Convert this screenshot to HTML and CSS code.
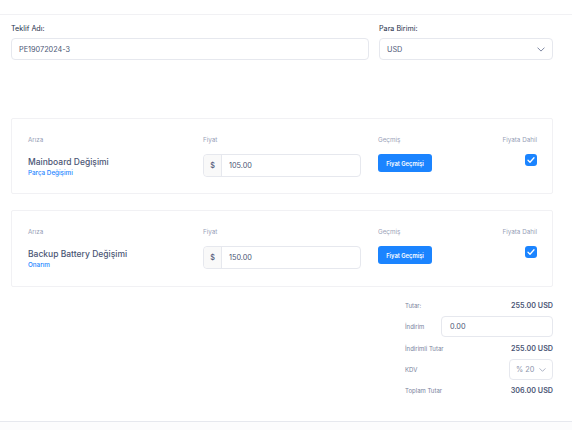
FILE: index.html
```
<!DOCTYPE html>
<html lang="tr">
<head>
<meta charset="utf-8">
<link rel="stylesheet" href="styles.css">
</head>
<body>
<div class="topbar"></div>
<div class="page">
  <div class="form-row">
    <div class="field grow">
      <label class="flabel">Teklif Adı:</label>
      <div class="input">PE19072024-3</div>
    </div>
    <div class="field side">
      <label class="flabel">Para Birimi:</label>
      <div class="input select">USD
        <svg class="chev" viewBox="0 0 10 6" width="8" height="5"><path d="M1 1l4 4 4-4" fill="none" stroke="#78829d" stroke-width="1.2" stroke-linecap="round" stroke-linejoin="round"/></svg>
      </div>
    </div>
  </div>

  <div class="card">
    <div class="grid">
      <div class="hd">Arıza</div>
      <div class="hd">Fiyat</div>
      <div class="hd">Geçmiş</div>
      <div class="hd right">Fiyata Dahil</div>
      <div class="name">
        <div class="title">Mainboard Değişimi</div>
        <div class="sub">Parça Değişimi</div>
      </div>
      <div class="igroup"><span class="addon">$</span><span class="ival">105.00</span></div>
      <div class="cell"><span class="btn">Fiyat Geçmişi</span></div>
      <div class="cell right"><span class="check"><svg viewBox="0 0 12 12" width="12" height="12"><path d="M3 6.2l2 2 4-4.4" fill="none" stroke="#fff" stroke-width="1.3" stroke-linecap="round" stroke-linejoin="round"/></svg></span></div>
    </div>
  </div>

  <div class="card second">
    <div class="grid">
      <div class="hd">Arıza</div>
      <div class="hd">Fiyat</div>
      <div class="hd">Geçmiş</div>
      <div class="hd right">Fiyata Dahil</div>
      <div class="name">
        <div class="title">Backup Battery Değişimi</div>
        <div class="sub">Onarım</div>
      </div>
      <div class="igroup"><span class="addon">$</span><span class="ival">150.00</span></div>
      <div class="cell"><span class="btn">Fiyat Geçmişi</span></div>
      <div class="cell right"><span class="check"><svg viewBox="0 0 12 12" width="12" height="12"><path d="M3 6.2l2 2 4-4.4" fill="none" stroke="#fff" stroke-width="1.3" stroke-linecap="round" stroke-linejoin="round"/></svg></span></div>
    </div>
  </div>

  <div class="summary">
    <div class="srow"><span class="sl">Tutar:</span><span class="sv">255.00 USD</span></div>
    <div class="srow"><span class="sl">İndirim</span><span class="input sinput">0.00</span></div>
    <div class="srow"><span class="sl">İndirimli Tutar</span><span class="sv">255.00 USD</span></div>
    <div class="srow"><span class="sl">KDV</span><span class="input kdv">% 20 <svg viewBox="0 0 10 6" width="7" height="4"><path d="M1 1l4 4 4-4" fill="none" stroke="#99a1b7" stroke-width="1.2" stroke-linecap="round" stroke-linejoin="round"/></svg></span></div>
    <div class="srow"><span class="sl">Toplam Tutar</span><span class="sv">306.00 USD</span></div>
  </div>
</div>
<div class="bottombar"></div>
</body>
</html>
```
FILE: styles.css
```
* { box-sizing: border-box; }
html, body { margin: 0; padding: 0; background: #fff; }
body {
  font-family: Inter, "Noto Sans", sans-serif;
  color: #252f4a;
  width: 572px;
  height: 430px;
  overflow: hidden;
  position: relative;
}
.topbar { height: 15px; border-bottom: 1px solid #f1f1f4; }
.page { padding: 0 19px 0 11px; }
.form-row { display: flex; gap: 10px; margin-top: 10px; }
.field { display: flex; flex-direction: column; }
.grow { flex: 1; }
.side { width: 174px; }
.flabel { font-size: 7.2px; font-weight: 400; color: #252f4a; height: 13px; line-height: 8px; }
.input {
  height: 22px;
  border: 1px solid #e6e8ee;
  border-radius: 4px;
  font-size: 7.3px;
  color: #4b5675;
  display: flex;
  align-items: center;
  padding: 0 7px;
}
.select { justify-content: space-between; padding-right: 7px; }
.card {
  border: 1px solid #f1f1f4;
  border-radius: 2px;
  padding: 17px 15px 15px 16px;
  margin-top: 58px;
}
.card.second { margin-top: 16px; padding-bottom: 16px; }
.grid {
  display: grid;
  grid-template-columns: 175px 175px 1fr auto;
  row-gap: 9px;
  align-items: start;
}
.hd { font-size: 6.3px; color: #99a1b7; line-height: 9px; }
.cell { display: flex; }
.right { text-align: right; justify-self: end; }
.name { padding-top: 2px; }
.title { font-size: 8.5px; font-weight: 500; color: #4b5675; line-height: 12px; }
.sub { font-size: 6.3px; font-weight: 500; color: #1b84ff; line-height: 10px; }
.igroup {
  width: 158px;
  height: 23px;
  border: 1px solid #e6e8ee;
  border-radius: 4px;
  display: flex;
  font-size: 7.3px;
  color: #4b5675;
}
.addon {
  width: 18px;
  background: #f9f9f9;
  border-right: 1px solid #e6e8ee;
  border-radius: 4px 0 0 4px;
  display: flex;
  align-items: center;
  justify-content: center;
  font-weight: 500;
  color: #4b5675;
}
.ival { display: flex; align-items: center; padding-left: 7px; }
.btn {
  display: flex;
  align-items: center;
  justify-content: center;
  width: 54px;
  height: 18px;
  background: #1b84ff;
  color: #fff;
  border-radius: 3px;
  font-size: 5.8px;
  font-weight: 600;
}
.check {
  display: block;
  width: 12px;
  height: 12px;
  border-radius: 3px;
  background: #1b84ff;
}
.check svg { display: block; }
.summary {
  width: 148px;
  margin-left: auto;
  margin-top: 8px;
  display: flex;
  flex-direction: column;
}
.srow {
  display: flex;
  justify-content: space-between;
  align-items: center;
  min-height: 21.3px;
}
.sl { font-size: 6px; color: #78829d; font-weight: 400; }
.sv { font-size: 7.2px; font-weight: 600; color: #4b5675; }
.sinput { width: 112px; height: 21px; padding: 0 8px; }
.kdv { width: 44px; height: 21px; padding: 0 6px; justify-content: space-between; color: #8a93ab; }
.bottombar {
  position: absolute;
  left: 0; right: 0;
  top: 421px;
  height: 9px;
  border-top: 1px solid #e6e8ee;
  background: #fcfcfd;
}
```
